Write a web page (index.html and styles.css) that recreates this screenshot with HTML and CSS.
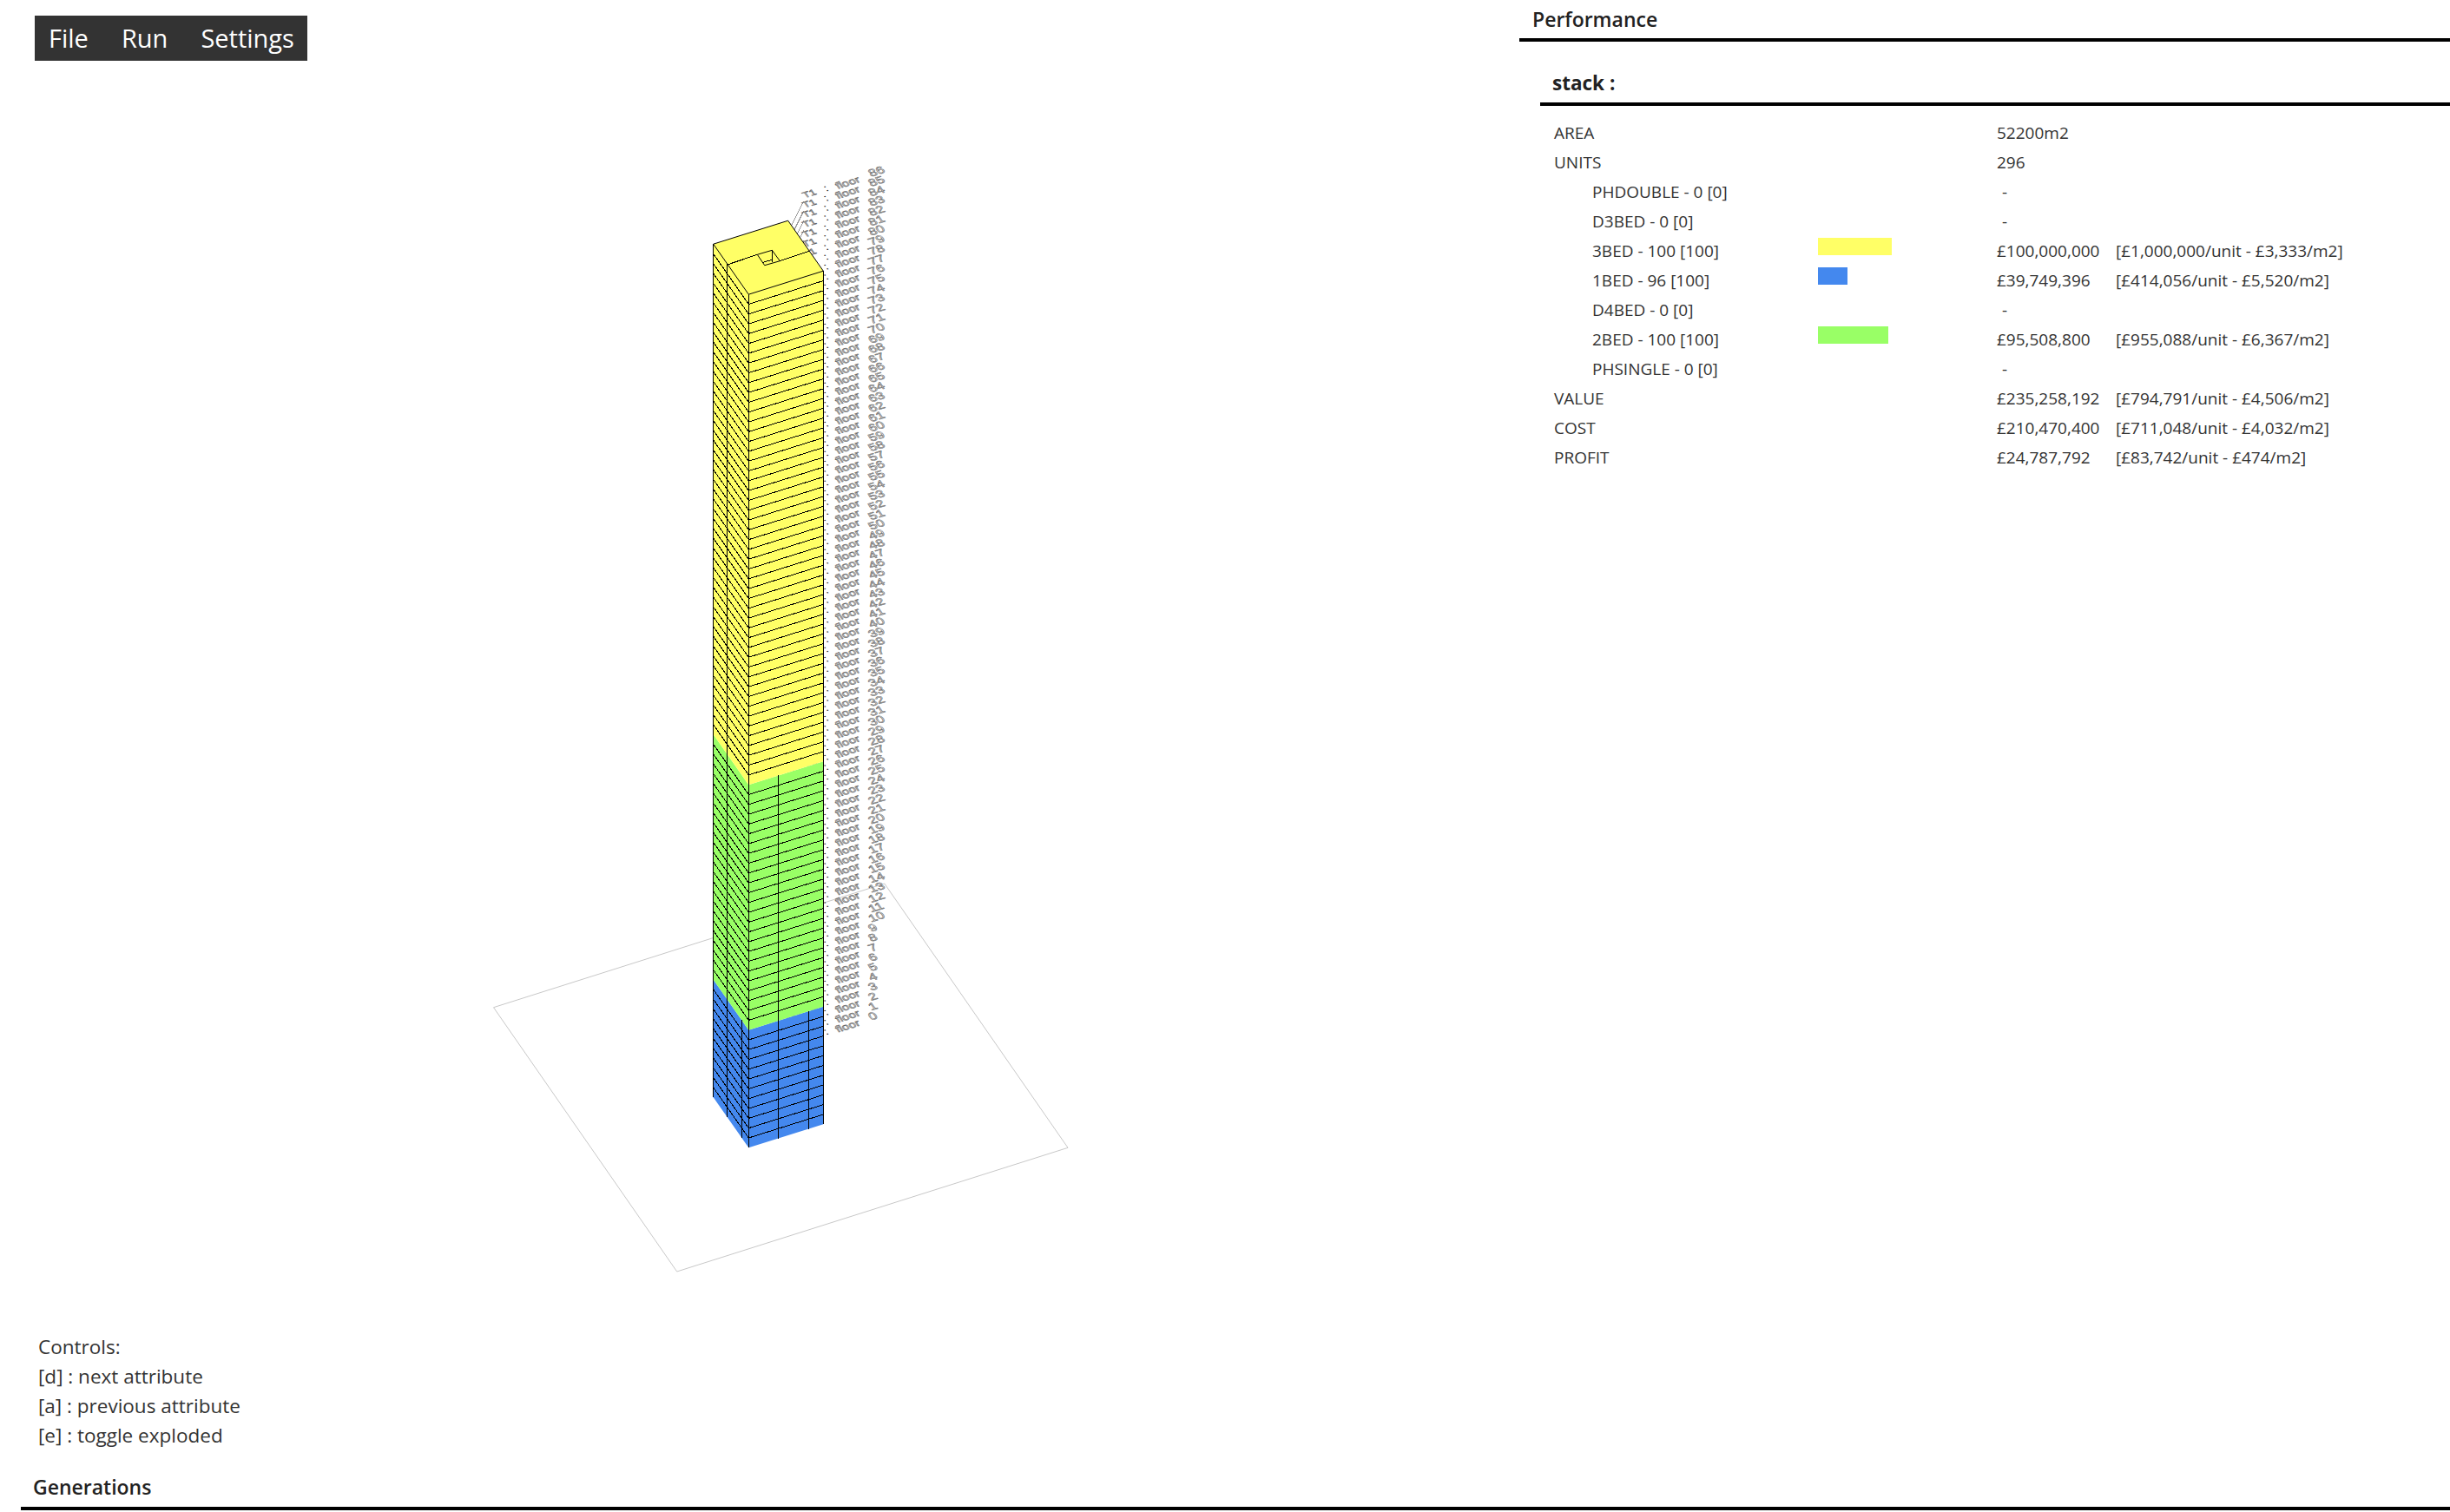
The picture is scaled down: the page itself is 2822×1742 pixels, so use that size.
FILE: index.html
```html
<!DOCTYPE html>
<html lang="en">
<head>
    <meta charset="UTF-8">
    <title>Stack</title>
    <link rel="stylesheet" href="styles.css">
</head>
<body>
    <div class="app">
        <div class="left">
            <div class="menu">
                <span class="menu-item">File</span>
                <span class="menu-item">Run</span>
                <span class="menu-item">Settings</span>
            </div>

            <svg id="viewer" class="viewer" viewBox="0 70 1750 1465"></svg>

            <div class="controls">
                <div>Controls:</div>
                <div>[d] : next attribute</div>
                <div>[a] : previous attribute</div>
                <div>[e] : toggle exploded</div>
            </div>
        </div>

        <div class="right">
            <div class="section-title performance">Performance</div>
            <div class="stack-title">stack :</div>

            <div class="rows">
                <div class="row"><span>AREA</span><span></span><span>52200m2</span><span></span></div>
                <div class="row"><span>UNITS</span><span></span><span>296</span><span></span></div>
                <div class="row sub"><span>PHDOUBLE - 0 [0]</span><span></span><span class="dash">-</span><span></span></div>
                <div class="row sub"><span>D3BED - 0 [0]</span><span></span><span class="dash">-</span><span></span></div>
                <div class="row sub"><span>3BED - 100 [100]</span><span><i class="bar yellow" style="width:85px"></i></span><span>£100,000,000</span><span>[£1,000,000/unit - £3,333/m2]</span></div>
                <div class="row sub"><span>1BED - 96 [100]</span><span><i class="bar blue" style="width:34px"></i></span><span>£39,749,396</span><span>[£414,056/unit - £5,520/m2]</span></div>
                <div class="row sub"><span>D4BED - 0 [0]</span><span></span><span class="dash">-</span><span></span></div>
                <div class="row sub"><span>2BED - 100 [100]</span><span><i class="bar green" style="width:81px"></i></span><span>£95,508,800</span><span>[£955,088/unit - £6,367/m2]</span></div>
                <div class="row sub"><span>PHSINGLE - 0 [0]</span><span></span><span class="dash">-</span><span></span></div>
                <div class="row"><span>VALUE</span><span></span><span>£235,258,192</span><span>[£794,791/unit - £4,506/m2]</span></div>
                <div class="row"><span>COST</span><span></span><span>£210,470,400</span><span>[£711,048/unit - £4,032/m2]</span></div>
                <div class="row"><span>PROFIT</span><span></span><span>£24,787,792</span><span>[£83,742/unit - £474/m2]</span></div>
            </div>
        </div>
    </div>

    <div class="section-title generations">Generations</div>

    <script src="app.js"></script>
</body>
</html>
```

FILE: styles.css
```css
* {
    box-sizing: border-box;
}

html, body {
    margin: 0;
    height: 100%;
    overflow: hidden;
    background: #fff;
}

body {
    font-family: "Open Sans", "Noto Sans", sans-serif;
    color: #333;
}

.app {
    display: flex;
    height: 1671px;
}

.left {
    width: 1750px;
    display: flex;
    flex-direction: column;
}

.right {
    flex: 1;
}

.menu {
    align-self: flex-start;
    display: flex;
    margin: 18px 0 0 40px;
    height: 52px;
    padding: 0 6px 0 7px;
    background: #333;
    color: #fff;
    font-size: 29px;
    line-height: 52px;
}

.menu-item {
    padding: 0 9px 0 9px;
    margin-right: 20px;
}

.menu-item:last-child {
    margin-right: 0;
}

.viewer {
    display: block;
    width: 1750px;
    height: 1465px;
}

.controls {
    padding-left: 44px;
    font-size: 22.5px;
    line-height: 34px;
}

.section-title {
    font-size: 23px;
    font-weight: 600;
    border-bottom: 4px solid #000;
    color: #222;
}

.generations {
    margin: 24px 0 2px 24px;
    padding-left: 14px;
    height: 45px;
    line-height: 36px;
}

.performance {
    height: 48px;
    padding-left: 15px;
    line-height: 44px;
}

.stack-title {
    margin: 28px 0 0 24px;
    padding-left: 14px;
    height: 46px;
    font-size: 22.5px;
    font-weight: 700;
    line-height: 40px;
    color: #222;
    border-bottom: 4px solid #000;
}

.rows {
    margin: 14px 0 0 40px;
    font-size: 19px;
}

.row {
    display: grid;
    grid-template-columns: 304px 206px 137px 1fr;
    height: 34px;
    line-height: 34px;
    white-space: nowrap;
}

.row.sub span:first-child {
    padding-left: 44px;
}

.dash {
    padding-left: 6px;
}

.bar {
    display: block;
    height: 20px;
    margin-top: 2px;
}

.yellow { background: #ffff66; }
.blue { background: #4488ee; }
.green { background: #99ff66; }

/* viewer drawing */
.plane {
    fill: none;
    stroke: #c8c8c8;
    stroke-width: 1;
}

.leader {
    stroke: #999;
    stroke-width: 1;
}

.tag {
    font-family: "Liberation Sans", sans-serif;
    font-size: 14px;
    fill: none;
    stroke: #666;
    stroke-width: 0.7px;
}

.tag-t {
    font-size: 12.5px;
}

.tag-num {
    font-size: 15.5px;
}

.tag-dots {
    font-size: 15px;
    fill: #222;
    stroke: none;
}

.face-yellow { fill: #ffff66; }
.face-green { fill: #99ff66; }
.face-blue { fill: #4488ee; }

.edge {
    fill: none;
    stroke: #000;
    stroke-width: 1;
}
```

FILE: app.js
```js
// tower drawing, everything is projected from the front base corner
const svg = document.getElementById('viewer');
const NS = 'http://www.w3.org/2000/svg';

const FLOORS = 87;
const STEP = 11.3;
const F = [862.3, 1322.3];
const U = [86, -27];
const V = [-40.6, -58];

function pt(a, b, h) {
    return [F[0] + U[0] * a + V[0] * b, F[1] + U[1] * a + V[1] * b - h * STEP];
}

function add(tag, attrs, text) {
    const el = document.createElementNS(NS, tag);
    for (const key in attrs) {
        el.setAttribute(key, attrs[key]);
    }
    if (text !== undefined) {
        el.textContent = text;
    }
    svg.appendChild(el);
    return el;
}

function poly(points, cls) {
    add('polygon', { points: points.map(p => p[0].toFixed(1) + ',' + p[1].toFixed(1)).join(' '), class: cls });
}

function line(p, q, cls) {
    add('line', { x1: p[0], y1: p[1], x2: q[0], y2: q[1], class: cls, 'shape-rendering': 'crispEdges' });
}

// ground plane
poly([[568.5, 1160.7], [779.7, 1465], [1230, 1322.3], [1018.8, 1018]], 'plane');

// floor labels lie on the ground plane, the tower covers the start of them
function tag(x, y, text, cls) {
    add('text', { class: cls, transform: 'matrix(0.98 -0.31 0.47 0.68 ' + x + ' ' + y + ')' }, text);
}

for (let i = 0; i < FLOORS; i++) {
    const dy = -i * STEP;
    if (i < 86) {
        line([903, 1238 + dy], [925.7, 1192.2 + dy], 'leader');
    }
    tag(927, 1200 + dy, 'T1', 'tag tag-t');
    tag(951.5, 1192.5 + dy, ':', 'tag tag-dots');
    tag(965.2, 1189.6 + dy, 'floor', 'tag');
    tag(1003.5, 1175.5 + dy, String(i), 'tag tag-num');
}

// colour bands: [from floor, to floor, class]
const bands = [
    [0, 12, 'face-blue'],
    [12, 37, 'face-green'],
    [37, FLOORS, 'face-yellow']
];

for (const [from, to, cls] of bands) {
    poly([pt(0, 0, from), pt(1, 0, from), pt(1, 0, to), pt(0, 0, to)], cls);
    poly([pt(0, 0, from), pt(0, 1, from), pt(0, 1, to), pt(0, 0, to)], cls);
}

// floor lines, no line where the colour changes
for (let h = 1; h < FLOORS; h++) {
    if (h === 12 || h === 37) {
        continue;
    }
    line(pt(0, 0, h), pt(1, 0, h), 'edge');
    line(pt(0, 0, h), pt(0, 1, h), 'edge');
}

// unit walls
line(pt(0.4, 0, 0), pt(0.4, 0, 37), 'edge');
line(pt(0.807, 0, 0), pt(0.807, 0, 12), 'edge');
line(pt(0, 0.606, 0), pt(0, 0.606, FLOORS), 'edge');
line(pt(0, 0.197, 0), pt(0, 0.197, 12), 'edge');

// corners
line(pt(0, 0, 0), pt(0, 0, FLOORS), 'edge');
line(pt(1, 0, 0), pt(1, 0, FLOORS), 'edge');
line(pt(0, 1, 0), pt(0, 1, FLOORS), 'edge');

// roof with the core
poly([pt(0, 1, FLOORS), pt(1, 1, FLOORS), pt(1, 0, FLOORS), pt(0, 0, FLOORS)], 'face-yellow');
poly([pt(0, 1, FLOORS), pt(1, 1, FLOORS), pt(1, 0, FLOORS), pt(0, 0, FLOORS)], 'edge');
line([837.7, 305], [872.3, 293.3], 'edge');
line([898.3, 300.7], [932.3, 289.3], 'edge');
poly([[872.3, 293.3], [889.3, 288.3], [898.3, 300.7], [880.7, 305.7]], 'edge');
line([878.5, 302.5], [890, 299], 'edge');
line([889.3, 288.3], [889.3, 302], 'edge');
```
